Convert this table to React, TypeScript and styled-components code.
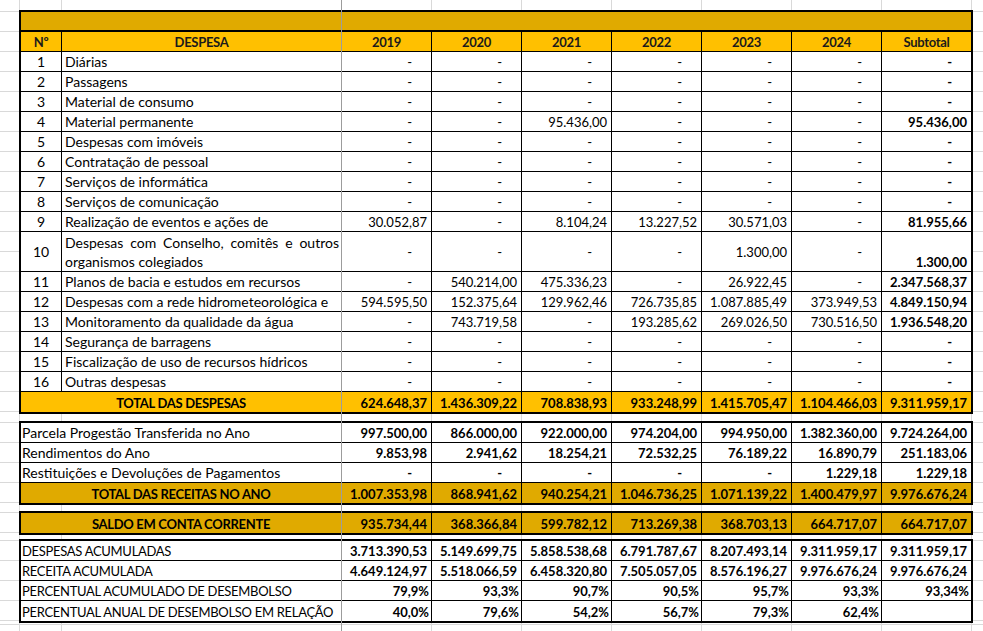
import React from 'react';
import styled, { createGlobalStyle, css } from 'styled-components';

const GRID = '#d9d9d9';
const GOLD = '#FFC000';
const DARK_GOLD = '#E0AA00';

const Global = createGlobalStyle`
  html, body { margin: 0; padding: 0; background: #fff; }
  body { font-family: Lato, 'Liberation Sans', sans-serif; color: #000; }
`;

const colLines = [19, 61, 431, 521, 611, 701, 791, 881, 971];
const vBg = colLines
  .map(
    (x) =>
      `linear-gradient(to right, transparent ${x}px, ${GRID} ${x}px, ${GRID} ${x + 1}px, transparent ${x + 1}px)`
  )
  .join(', ');

const Sheet = styled.div`
  position: relative;
  width: 983px;
  height: 631px;
  overflow: hidden;
  background-color: #fff;
  background-image: ${vBg};
  display: flex;
  flex-direction: column;
`;

const FreezeLine = styled.div`
  position: absolute;
  left: 341px;
  top: 0;
  bottom: 0;
  width: 1px;
  background: #9c9c9c;
  z-index: 3;
`;

const Band = styled.div<{ $h: number; $lines?: boolean }>`
  flex: none;
  height: ${(p) => p.$h}px;
  padding-left: 19px;
  box-sizing: border-box;
  ${(p) =>
    p.$lines &&
    css`
      background-image: linear-gradient(to bottom, transparent 19px, ${GRID} 19px);
      background-size: 100% 20px;
      background-position: 0 2px;
    `}
`;

const Block = styled.div`
  width: 954px;
  box-sizing: border-box;
  border: 2px solid #000;
  background: #fff;
  display: flex;
  flex-direction: column;
`;

const Row = styled.div<{ $h?: number; $bg?: string; $line?: 'none' | 'thin' | 'thick' }>`
  display: grid;
  grid-template-columns: 41px 280px repeat(6, 90px) 89px;
  height: ${(p) => p.$h ?? 20}px;
  box-sizing: border-box;
  background: ${(p) => p.$bg ?? '#fff'};
  border-bottom: ${(p) =>
    p.$line === 'none' ? 'none' : p.$line === 'thick' ? '2px solid #000' : '1px solid #000'};
`;

const Cell = styled.div<{
  $span?: number;
  $align?: 'left' | 'center' | 'right';
  $bold?: boolean;
  $valign?: 'center' | 'end';
  $pl?: number;
  $pr?: number;
  $num?: boolean;
  $caps?: boolean;
}>`
  grid-column: span ${(p) => p.$span ?? 1};
  display: flex;
  align-items: ${(p) => (p.$valign === 'end' ? 'flex-end' : 'center')};
  justify-content: ${(p) =>
    p.$align === 'left' ? 'flex-start' : p.$align === 'center' ? 'center' : 'flex-end'};
  padding: 1px ${(p) => p.$pr ?? 0}px 0 ${(p) => p.$pl ?? 0}px;
  box-sizing: border-box;
  min-width: 0;
  border-right: 1px solid #000;
  &:last-child {
    border-right: none;
  }
  font-size: ${(p) => (p.$num || p.$caps ? 13 : 14)}px;
  letter-spacing: ${(p) => (p.$caps ? '-0.3px' : 'normal')};
  font-weight: ${(p) => (p.$bold ? 700 : 400)};
  white-space: nowrap;
  overflow: hidden;
  line-height: 18px;
`;

const HeadCell = styled(Cell).attrs({ $align: 'center', $bold: true, $caps: true })`
  color: #1b1b1b;
`;

const WrapCell = styled(Cell)`
  display: block;
  white-space: normal;
  padding: 1px 2px 0 3px;
  line-height: 19px;
`;

const JustLine = styled.div`
  text-align: justify;
  text-align-last: justify;
`;

const PlainLine = styled.div`
  text-align: left;
`;

type ValProps = { v: string; bold?: boolean; valign?: 'center' | 'end' };

function Val({ v, bold, valign }: ValProps) {
  const pr = v === '-' ? 19 : v.endsWith('%') ? 2 : 4;
  return (
    <Cell $num $bold={bold} $pr={pr} $valign={valign} $align="right">
      {v}
    </Cell>
  );
}

type Expense = { n: number; label: string | [string, string]; vals: string[] };

const D = '-';
const allDash = [D, D, D, D, D, D, D];

const expenses: Expense[] = [
  { n: 1, label: 'Diárias', vals: allDash },
  { n: 2, label: 'Passagens', vals: allDash },
  { n: 3, label: 'Material de consumo', vals: allDash },
  { n: 4, label: 'Material permanente', vals: [D, D, '95.436,00', D, D, D, '95.436,00'] },
  { n: 5, label: 'Despesas com imóveis', vals: allDash },
  { n: 6, label: 'Contratação de pessoal', vals: allDash },
  { n: 7, label: 'Serviços de informática', vals: allDash },
  { n: 8, label: 'Serviços de comunicação', vals: allDash },
  {
    n: 9,
    label: 'Realização de eventos e ações de',
    vals: ['30.052,87', D, '8.104,24', '13.227,52', '30.571,03', D, '81.955,66'],
  },
  {
    n: 10,
    label: ['Despesas com Conselho, comitês e outros', 'organismos colegiados'],
    vals: [D, D, D, D, '1.300,00', D, '1.300,00'],
  },
  {
    n: 11,
    label: 'Planos de bacia e estudos em recursos',
    vals: [D, '540.214,00', '475.336,23', D, '26.922,45', D, '2.347.568,37'],
  },
  {
    n: 12,
    label: 'Despesas com a rede hidrometeorológica e',
    vals: ['594.595,50', '152.375,64', '129.962,46', '726.735,85', '1.087.885,49', '373.949,53', '4.849.150,94'],
  },
  {
    n: 13,
    label: 'Monitoramento da qualidade da água',
    vals: [D, '743.719,58', D, '193.285,62', '269.026,50', '730.516,50', '1.936.548,20'],
  },
  { n: 14, label: 'Segurança de barragens', vals: allDash },
  { n: 15, label: 'Fiscalização de uso de recursos hídricos', vals: allDash },
  { n: 16, label: 'Outras despesas', vals: allDash },
];

const totalDespesas = ['624.648,37', '1.436.309,22', '708.838,93', '933.248,99', '1.415.705,47', '1.104.466,03', '9.311.959,17'];

const receitas: { label: string; vals: string[] }[] = [
  {
    label: 'Parcela Progestão Transferida no Ano',
    vals: ['997.500,00', '866.000,00', '922.000,00', '974.204,00', '994.950,00', '1.382.360,00', '9.724.264,00'],
  },
  {
    label: 'Rendimentos do Ano',
    vals: ['9.853,98', '2.941,62', '18.254,21', '72.532,25', '76.189,22', '16.890,79', '251.183,06'],
  },
  {
    label: 'Restituições e Devoluções de Pagamentos',
    vals: [D, D, D, D, D, '1.229,18', '1.229,18'],
  },
];

const totalReceitas = ['1.007.353,98', '868.941,62', '940.254,21', '1.046.736,25', '1.071.139,22', '1.400.479,97', '9.976.676,24'];

const saldo = ['935.734,44', '368.366,84', '599.782,12', '713.269,38', '368.703,13', '664.717,07', '664.717,07'];

const acumulados: { label: string; vals: string[] }[] = [
  {
    label: 'DESPESAS ACUMULADAS',
    vals: ['3.713.390,53', '5.149.699,75', '5.858.538,68', '6.791.787,67', '8.207.493,14', '9.311.959,17', '9.311.959,17'],
  },
  {
    label: 'RECEITA ACUMULADA',
    vals: ['4.649.124,97', '5.518.066,59', '6.458.320,80', '7.505.057,05', '8.576.196,27', '9.976.676,24', '9.976.676,24'],
  },
  {
    label: 'PERCENTUAL ACUMULADO DE DESEMBOLSO',
    vals: ['79,9%', '93,3%', '90,7%', '90,5%', '95,7%', '93,3%', '93,34%'],
  },
  {
    label: 'PERCENTUAL ANUAL DE DESEMBOLSO EM RELAÇÃO',
    vals: ['40,0%', '79,6%', '54,2%', '56,7%', '79,3%', '62,4%', ''],
  },
];

const headers = ['2019', '2020', '2021', '2022', '2023', '2024', 'Subtotal'];

export default function App() {
  return (
    <>
      <Global />
      <Sheet>
        <FreezeLine />
        <Band $h={10} />
        <Band $h={404} $lines>
          <Block>
            <Row $bg={DARK_GOLD} $line="thick">
              <Cell $span={9} />
            </Row>
            <Row $bg={GOLD}>
              <HeadCell>Nº</HeadCell>
              <HeadCell>DESPESA</HeadCell>
              {headers.map((h) => (
                <HeadCell key={h}>{h}</HeadCell>
              ))}
            </Row>
            {expenses.map((e) => {
              const tall = Array.isArray(e.label);
              return (
                <Row key={e.n} $h={tall ? 40 : 20}>
                  <Cell $align="center">{e.n}</Cell>
                  {Array.isArray(e.label) ? (
                    <WrapCell>
                      <JustLine>{e.label[0]}</JustLine>
                      <PlainLine>{e.label[1]}</PlainLine>
                    </WrapCell>
                  ) : (
                    <Cell $align="left" $pl={3}>
                      {e.label}
                    </Cell>
                  )}
                  {e.vals.map((v, i) => (
                    <Val
                      key={i}
                      v={v}
                      bold={i === 6}
                      valign={tall && i === 6 ? 'end' : 'center'}
                    />
                  ))}
                </Row>
              );
            })}
            <Row $bg={GOLD} $line="none">
              <Cell $span={2} $align="center" $bold $caps>
                TOTAL DAS DESPESAS
              </Cell>
              {totalDespesas.map((v, i) => (
                <Val key={i} v={v} bold />
              ))}
            </Row>
          </Block>
        </Band>
        <Band $h={7} />
        <Band $h={84} $lines>
          <Block>
            {receitas.map((r) => (
              <Row key={r.label}>
                <Cell $span={2} $align="left" $pl={1}>
                  {r.label}
                </Cell>
                {r.vals.map((v, i) => (
                  <Val key={i} v={v} bold />
                ))}
              </Row>
            ))}
            <Row $bg={DARK_GOLD} $line="none">
              <Cell $span={2} $align="center" $bold $caps>
                TOTAL DAS RECEITAS NO ANO
              </Cell>
              {totalReceitas.map((v, i) => (
                <Val key={i} v={v} bold />
              ))}
            </Row>
          </Block>
        </Band>
        <Band $h={6} />
        <Band $h={24} $lines>
          <Block>
            <Row $bg={DARK_GOLD} $line="none">
              <Cell $span={2} $align="center" $bold $caps>
                SALDO EM CONTA CORRENTE
              </Cell>
              {saldo.map((v, i) => (
                <Val key={i} v={v} bold />
              ))}
            </Row>
          </Block>
        </Band>
        <Band $h={4} />
        <Band $h={84} $lines>
          <Block>
            {acumulados.map((r, idx) => (
              <Row key={r.label} $line={idx === acumulados.length - 1 ? 'none' : 'thin'}>
                <Cell $span={2} $align="left" $pl={1} $caps>
                  {r.label}
                </Cell>
                {r.vals.map((v, i) => (
                  <Val key={i} v={v} bold />
                ))}
              </Row>
            ))}
          </Block>
        </Band>
        <Band $h={12} $lines />
      </Sheet>
    </>
  );
}
